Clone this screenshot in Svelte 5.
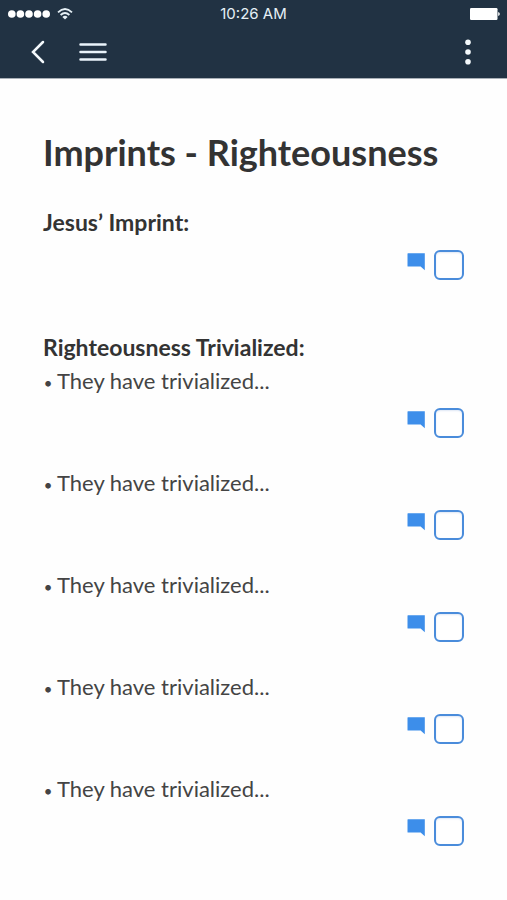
<script>
  let jesus = $state({ done: false });
  let items = $state(
    Array.from({ length: 5 }, () => ({ text: 'They have trivialized...', done: false }))
  );
</script>

{#snippet actions(item, label)}
  <div class="actions">
    <button class="comment" aria-label="Comment on {label}">
      <svg width="18" height="18" viewBox="0 0 18 18" aria-hidden="true">
        <path d="M1 0.3H17.8V17.2L13.6 13.4H1Q0.5 13.4 0.5 12.9V0.8Q0.5 0.3 1 0.3Z" fill="#3d8eea" />
      </svg>
    </button>
    <input type="checkbox" aria-label="Mark {label} as done" bind:checked={item.done} />
  </div>
{/snippet}

<header>
  <div class="status">
    <div class="signal">
      <svg width="43" height="10" viewBox="0 0 43 10" aria-hidden="true" fill="#fff">
        <circle cx="4.8" cy="5" r="3.8" />
        <circle cx="13.4" cy="5" r="3.8" />
        <circle cx="22" cy="5" r="3.8" />
        <circle cx="30.6" cy="5" r="3.8" />
        <circle cx="39.2" cy="5" r="3.8" />
      </svg>
      <svg width="16" height="12" viewBox="0 0 16 12" aria-hidden="true" fill="none" stroke="#e6f0f6" stroke-width="1.8">
        <path d="M1 4.3Q8 -2.2 15 4.3" />
        <path d="M3.6 7Q8 2.9 12.4 7" />
        <path d="M8 11.6L5.4 8.9Q8 6.8 10.6 8.9Z" fill="#e6f0f6" stroke="none" />
      </svg>
    </div>
    <time>10:26 AM</time>
    <svg class="battery" width="31" height="12" viewBox="0 0 31 12" aria-hidden="true" fill="#fff">
      <rect x="1" y="0" width="27.5" height="12" rx="1.2" />
      <path d="M29.2 4Q30.8 4.4 30.8 6T29.2 8Z" />
    </svg>
  </div>
  <nav>
    <button aria-label="Back">
      <svg width="14" height="24" viewBox="0 0 14 24" aria-hidden="true">
        <path d="M12 2L2 12L12 22" fill="none" stroke="#f4f9fc" stroke-width="2.5" stroke-linecap="round" />
      </svg>
    </button>
    <button class="menu" aria-label="Menu">
      <svg width="28" height="20" viewBox="0 0 28 20" aria-hidden="true">
        <path d="M1.5 2.5H26.5M1.5 10H26.5M1.5 17.5H26.5" stroke="#eaf4fb" stroke-width="2.5" stroke-linecap="round" />
      </svg>
    </button>
    <button class="more" aria-label="More options">
      <svg width="6" height="26" viewBox="0 0 6 26" aria-hidden="true" fill="#f4f9fc">
        <circle cx="3" cy="3.3" r="2.8" />
        <circle cx="3" cy="13" r="2.8" />
        <circle cx="3" cy="22.7" r="2.8" />
      </svg>
    </button>
  </nav>
</header>

<main>
  <h1>Imprints - Righteousness</h1>

  <section>
    <h2>Jesus’ Imprint:</h2>
    {@render actions(jesus, 'Jesus’ Imprint')}
  </section>

  <section>
    <h2>Righteousness Trivialized:</h2>
    <ul>
      {#each items as item, i}
        <li>
          <p><span class="bullet">•</span>{item.text}</p>
          {@render actions(item, `item ${i + 1}`)}
        </li>
      {/each}
    </ul>
  </section>
</main>

<style>
  :global(body) {
    margin: 0;
    background: #fefefe;
    color: #333;
    font-family: Lato, "Noto Sans", sans-serif;
  }
  header {
    background: #213243;
    border-bottom: 1px solid #a9b0b7;
    color: #e6f0f6;
  }
  .status {
    display: grid;
    grid-template-columns: 1fr auto 1fr;
    align-items: center;
    height: 27px;
    padding: 0 7px;
  }
  .signal {
    display: flex;
    align-items: center;
    gap: 7px;
  }
  time {
    font: 15px/16px Inter, sans-serif;
  }
  .battery {
    justify-self: end;
  }
  nav {
    display: flex;
    align-items: center;
    box-sizing: border-box;
    height: 51px;
    padding: 0 36px 2px 31px;
  }
  button {
    display: flex;
    padding: 0;
    border: 0;
    background: none;
    cursor: pointer;
  }
  .menu {
    margin-left: 34px;
  }
  .more {
    margin-left: auto;
  }
  main {
    padding: 49px 43px 24px;
  }
  h1 {
    margin: 0 0 30px;
    font-size: 36px;
    line-height: 48px;
    font-weight: 700;
  }
  section {
    margin-bottom: 51px;
  }
  h2, p {
    margin: 0;
    font-size: 22px;
    line-height: 33px;
  }
  h2 {
    font-size: 23px;
    font-weight: 700;
  }
  p {
    color: #444;
  }
  .bullet {
    display: inline-block;
    width: 14px;
    font-family: Inter, sans-serif;
    font-size: 18px;
    line-height: 16px;
  }
  ul {
    list-style: none;
    margin: 0;
    padding: 0;
    display: grid;
    gap: 28px;
  }
  .actions {
    display: flex;
    justify-content: flex-end;
    gap: 9px;
    margin-top: 11px;
  }
  .comment {
    align-self: flex-start;
    padding-top: 3px;
  }
  input {
    appearance: none;
    box-sizing: border-box;
    width: 30px;
    height: 30px;
    margin: 0;
    border: 2px solid #4a8cdb;
    border-radius: 6px;
    background: #fff;
    box-shadow: inset 0 1px 2px #dfe7f5;
    cursor: pointer;
  }
  input:checked {
    background: #3d8eea;
  }
</style>
